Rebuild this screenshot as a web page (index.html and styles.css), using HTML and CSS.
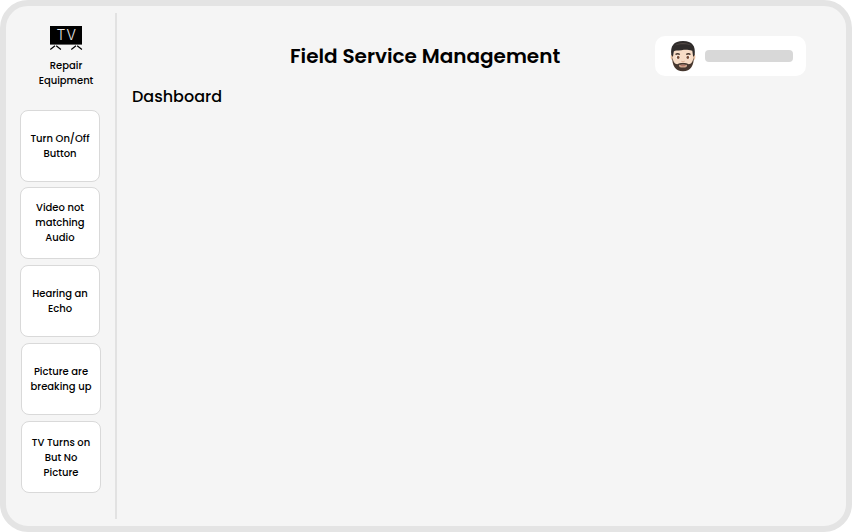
FILE: index.html
```html
<!DOCTYPE html>
<html lang="en">
<head>
<meta charset="utf-8">
<title>Field Service Management</title>
<link rel="stylesheet" href="styles.css">
</head>
<body>
<div class="app">
  <aside class="sidebar">
    <div class="equipment">
      <svg class="tv" width="34" height="26" viewBox="0 0 34 26" fill="none">
        <path fill="#000" d="M1 1h32v18.600H1z"/>
        <text class="tv-text" x="7.500" y="14.800">T</text>
        <text class="tv-text" x="17.500" y="14.800">V</text>
        <path stroke="#000" stroke-width="1.2" d="M1.300 24.500 6 20.800M7.200 20.800l4.700 3.700M22.300 24.500l4.700-3.700M28.200 20.800l4.700 3.700"/>
      </svg>
      <p class="label">Repair<br>Equipment</p>
    </div>
    <nav class="issues">
      <a class="card label">Turn On/Off<br>Button</a>
      <a class="card card-raised label">Video not<br>matching<br>Audio</a>
      <a class="card label">Hearing an<br>Echo</a>
      <a class="card card-shifted label">Picture are<br>breaking up</a>
      <a class="card card-shifted label">TV Turns on<br>But No<br>Picture</a>
    </nav>
  </aside>
  <main class="content">
    <header class="header">
      <h1 class="title">Field Service Management</h1>
      <div class="profile">
        <svg class="avatar" width="26" height="32" viewBox="0 0 26 32">
          <ellipse cx="2.4" cy="17" rx="1.7" ry="3" fill="#e5bd9f"/>
          <ellipse cx="23.6" cy="17" rx="1.7" ry="3" fill="#e5bd9f"/>
          <path fill="#f7dcc6" d="M2.500 9h21v12c0 6-5 9.500-10.500 9.500S2.500 27 2.500 21z"/>
          <path fill="#302c2b" d="M1.300 15C.3 6 3.500 1 13 1s12.700 5 11.700 14l-1.500 2-.9-6.300C18 9.800 16 9.400 11.500 10.200 7.500 10.800 5 10 3.800 11.500L2.900 17z"/>
          <path fill="#544a46" d="M5 5.500C8 2.200 18 2 21.500 5.500 17 3.800 9 4 5 5.500z"/>
          <path fill="#46372f" d="M2.300 17c1 5 2.500 7.200 5 7.200 2-1.700 9.400-1.700 11.400 0 2.500 0 4-2.200 5-7.200.4 8-3 14.300-10.700 14.300S1.900 25 2.300 17z"/>
          <path fill="#cfa58b" d="M8.800 25c2-.8 6.400-.8 8.400 0l-.7 2c-1.500.8-5.500.8-7 0z"/>
          <path fill="#a9665c" d="M10 25.200h6c-1.500 1.300-4.500 1.300-6 0z"/>
          <path fill="none" stroke="#45342b" stroke-width="1.300" d="M5.500 14.500c1.300-.9 3-.9 4.300 0M16.200 14.500c1.300-.9 3-.9 4.300 0"/>
          <ellipse cx="8" cy="17.500" rx="2.200" ry="1.400" fill="#fff"/>
          <ellipse cx="18" cy="17.500" rx="2.200" ry="1.400" fill="#fff"/>
          <circle cx="8.200" cy="17.500" r="1.400" fill="#754831"/>
          <circle cx="17.800" cy="17.500" r="1.400" fill="#754831"/>
          <path fill="none" stroke="#d3a283" d="M11.500 21.300c1 .7 2 .7 3 0"/>
        </svg>
        <span class="name-placeholder"></span>
      </div>
    </header>
    <h2 class="subtitle">Dashboard</h2>
  </main>
</div>
</body>
</html>
```
FILE: styles.css
```css
* { box-sizing: border-box; }
body {
  margin: 0;
  background: #fff;
  color: #000;
  font-family: Poppins, Inter, sans-serif;
}
.app {
  display: flex;
  width: 852px;
  height: 532px;
  border: 6px solid #e4e4e4;
  border-radius: 28px;
  background: #f5f5f5;
}
.sidebar {
  width: 111px;
  height: 506px;
  margin-top: 7px;
  border-right: 2px solid #e2e2e2;
}
.equipment {
  display: flex;
  flex-direction: column;
  align-items: center;
  height: 91px;
  padding: 12px 0 0 11px;
}
.label {
  margin: 0;
  font-size: 10px;
  font-weight: 500;
  line-height: 15px;
  text-align: center;
}
.tv { margin-bottom: 7px; }
.tv-text {
  fill: #e8e8e8;
  font-family: Inter, sans-serif;
  font-size: 14px;
  font-weight: 300;
}
.issues {
  display: flex;
  flex-direction: column;
  gap: 6px;
  padding: 6px 0 0 14px;
}
.card {
  display: flex;
  flex-direction: column;
  align-items: center;
  justify-content: center;
  width: 80px;
  height: 72px;
  border: 1px solid #d9d9d9;
  border-radius: 8px;
  background: #fff;
}
.card:first-child { margin-bottom: -1px; }
.card-raised { padding-bottom: 2px; }
.card-shifted { margin-left: 1px; }
.content { flex: 1; padding: 30px 40px 0 15px; }
.header { display: flex; align-items: center; height: 40px; }
.title {
  margin: 0 0 0 158px;
  font-size: 20px;
  font-weight: 600;
  line-height: 30px;
  white-space: nowrap;
}
.profile {
  display: flex;
  align-items: center;
  gap: 9px;
  width: 151px;
  height: 40px;
  margin-left: auto;
  padding-left: 15px;
  border-radius: 10px;
  background: #fff;
}
.name-placeholder {
  width: 88px;
  height: 12px;
  border-radius: 4px;
  background: #d8d8d8;
}
.subtitle {
  margin: 9px 0 0;
  font-size: 16px;
  font-weight: 500;
  line-height: 24px;
}
```
